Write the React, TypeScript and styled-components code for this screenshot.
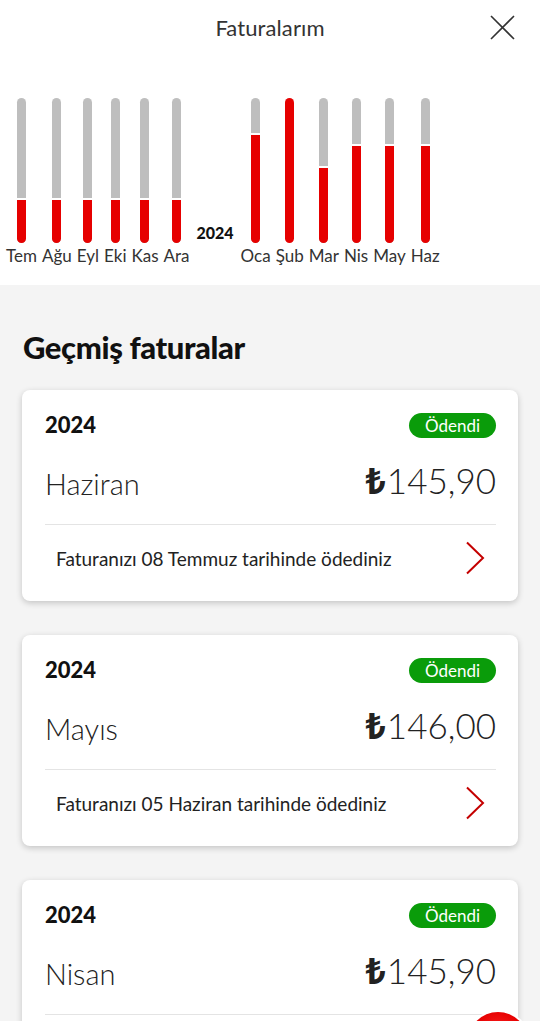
import React from 'react'
import styled, { createGlobalStyle } from 'styled-components'

const GlobalStyle = createGlobalStyle`
  * { box-sizing: border-box; }
  html, body {
    margin: 0;
    padding: 0;
    background: #f4f4f4;
    font-family: Lato, "Noto Sans", "DejaVu Sans", sans-serif;
    color: #262626;
  }
`

const months = [
  { label: 'Tem', paid: 31 },
  { label: 'Ağu', paid: 31 },
  { label: 'Eyl', paid: 31 },
  { label: 'Eki', paid: 31 },
  { label: 'Kas', paid: 31 },
  { label: 'Ara', paid: 31 },
  { label: '2024', year: true },
  { label: 'Oca', paid: 76 },
  { label: 'Şub', paid: 100 },
  { label: 'Mar', paid: 53 },
  { label: 'Nis', paid: 68 },
  { label: 'May', paid: 68 },
  { label: 'Haz', paid: 68 },
]

const invoices = [
  { year: '2024', month: 'Haziran', amount: '145,90', note: 'Faturanızı 08 Temmuz tarihinde ödediniz' },
  { year: '2024', month: 'Mayıs', amount: '146,00', note: 'Faturanızı 05 Haziran tarihinde ödediniz' },
  { year: '2024', month: 'Nisan', amount: '145,90', note: 'Faturanızı 07 Mayıs tarihinde ödediniz' },
]

const Top = styled.div`
  background: #fff;
  padding-bottom: 18px;
`

const Header = styled.header`
  height: 54px;
  display: grid;
  grid-template-columns: 1fr auto 1fr;
  align-items: center;
`

const Title = styled.h1`
  grid-column: 2;
  margin: 0;
  font-size: 22px;
  font-weight: 400;
  color: #333;
  letter-spacing: 0.1px;
`

const Close = styled.button`
  justify-self: end;
  margin-right: 25px;
  width: 26px;
  height: 26px;
  padding: 0;
  border: 0;
  background: none;
  display: flex;
  align-items: center;
  justify-content: center;
`

const Chart = styled.div`
  display: flex;
  align-items: flex-end;
  gap: 5px;
  padding: 44px 0 0 6px;
`

const Column = styled.div`
  display: flex;
  flex-direction: column;
  align-items: center;
`

const Track = styled.div`
  width: 9px;
  height: 145px;
  border-radius: 5px;
  background: #bebebe;
  overflow: hidden;
  display: flex;
  flex-direction: column;
  justify-content: flex-end;
`

const Fill = styled.div<{ $full: boolean }>`
  background: #e60000;
  border-top: ${p => (p.$full ? '0' : '2px solid #fff')};
`

const MonthLabel = styled.span`
  margin-top: 1px;
  font-size: 17px;
  line-height: 23px;
  color: #333;
`

const YearMark = styled.span`
  font-size: 16px;
  font-weight: 900;
  color: #111;
  line-height: 18px;
  margin: 0 2px 25px;
`

const Section = styled.section`
  padding: 44px 22px 40px;
  display: flex;
  flex-direction: column;
  gap: 34px;
`

const Heading = styled.h2`
  margin: 0 0 -9px 1px;
  font-size: 31px;
  line-height: 36px;
  font-weight: 900;
  color: #111;
  letter-spacing: -0.4px;
`

const Card = styled.article`
  background: #fff;
  border-radius: 8px;
  box-shadow: 0 2px 6px rgba(0, 0, 0, 0.2);
  padding: 22px 22px 10px 23px;
`

const Row = styled.div`
  display: flex;
  justify-content: space-between;
  align-items: center;
`

const Year = styled.span`
  font-size: 22px;
  line-height: 26px;
  font-weight: 900;
  color: #111;
`

const Badge = styled.span`
  background: #0a9c0a;
  color: #fff;
  border-radius: 13px;
  height: 25px;
  padding: 0 16px;
  font-size: 17px;
  line-height: 25px;
`

const AmountRow = styled(Row)`
  margin-top: 20px;
  height: 44px;
  padding-bottom: 22px;
  box-sizing: content-box;
  border-bottom: 1px solid #e4e4e4;
`

const Month = styled.span`
  font-size: 29px;
  font-weight: 300;
  color: #222;
  padding-top: 6px;
`

const Amount = styled.span`
  font-size: 35px;
  font-weight: 300;
  color: #222;
`

const Lira = styled.span`
  font-weight: 700;
  font-family: "Noto Sans", "DejaVu Sans", sans-serif;
  margin-right: 1px;
`

const Footer = styled(Row)`
  height: 66px;
  padding: 0 11px;
`

const Note = styled.span`
  font-size: 19px;
  color: #222;
`

const Fab = styled.div`
  position: fixed;
  left: 468px;
  top: 1012px;
  width: 60px;
  height: 60px;
  border-radius: 50%;
  background: radial-gradient(circle at 50% 40%, #ff2a2a 0%, #e60000 55%, #b80000 100%);
  box-shadow: 0 0 0 2px #fff;
`

const Chevron = () => (
  <svg width="20" height="34" viewBox="0 0 20 34" fill="none">
    <path d="M2 1.5 L18 17 L2 32.5" stroke="#c40000" strokeWidth="2" />
  </svg>
)

const CloseIcon = () => (
  <svg width="25" height="25" viewBox="0 0 25 25" fill="none">
    <path d="M1 1 L24 24 M24 1 L1 24" stroke="#333" strokeWidth="1.6" />
  </svg>
)

const App = () => (
  <>
    <GlobalStyle />
    <Top>
      <Header>
        <Title>Faturalarım</Title>
        <Close aria-label="Kapat"><CloseIcon /></Close>
      </Header>
      <Chart>
        {months.map(m =>
          m.year ? (
            <YearMark key={m.label}>{m.label}</YearMark>
          ) : (
            <Column key={m.label}>
              <Track>
                <Fill $full={m.paid === 100} style={{ height: `${m.paid}%` }} />
              </Track>
              <MonthLabel>{m.label}</MonthLabel>
            </Column>
          )
        )}
      </Chart>
    </Top>
    <Section>
      <Heading>Geçmiş faturalar</Heading>
      {invoices.map(inv => (
        <Card key={inv.month}>
          <Row>
            <Year>{inv.year}</Year>
            <Badge>Ödendi</Badge>
          </Row>
          <AmountRow>
            <Month>{inv.month}</Month>
            <Amount><Lira>₺</Lira>{inv.amount}</Amount>
          </AmountRow>
          <Footer>
            <Note>{inv.note}</Note>
            <Chevron />
          </Footer>
        </Card>
      ))}
    </Section>
    <Fab />
  </>
)

export default App
